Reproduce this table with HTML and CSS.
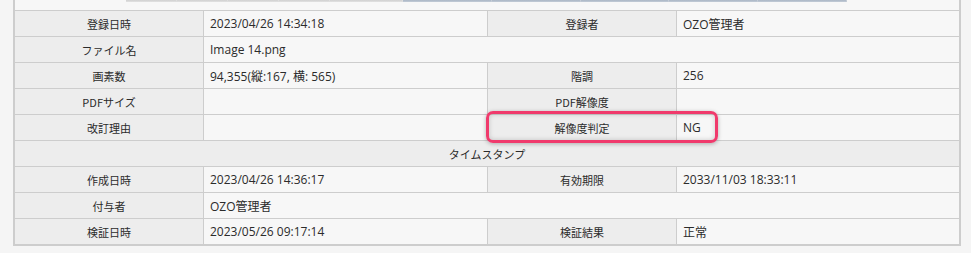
FILE: index.html
```html
<!DOCTYPE html>
<html lang="ja">
<head>
<meta charset="utf-8">
<title>画像情報</title>
<link rel="stylesheet" href="styles.css">
</head>
<body>
<div class="panel">
  <div class="tabs-edge">
    <span class="seg gray"></span><span class="seg gray"></span><span class="seg gray"></span><span class="seg gray"></span><span class="seg gray wide"></span>
    <span class="seg blue"></span><span class="seg blue"></span><span class="seg blue"></span><span class="seg blue"></span><span class="seg blue"></span>
  </div>
  <div class="info-grid">
    <div class="cell label first">登録日時</div>
    <div class="cell value">2023/04/26 14:34:18</div>
    <div class="cell label">登録者</div>
    <div class="cell value">OZO管理者</div>

    <div class="cell label first">ファイル名</div>
    <div class="cell value span3">Image 14.png</div>

    <div class="cell label first">画素数</div>
    <div class="cell value">94,355(縦:167, 横: 565)</div>
    <div class="cell label">階調</div>
    <div class="cell value">256</div>

    <div class="cell label first">PDFサイズ</div>
    <div class="cell value"></div>
    <div class="cell label">PDF解像度</div>
    <div class="cell value"></div>

    <div class="cell label first">改訂理由</div>
    <div class="cell value"></div>
    <div class="cell label">解像度判定</div>
    <div class="cell value">NG</div>

    <div class="cell section">タイムスタンプ</div>

    <div class="cell label first">作成日時</div>
    <div class="cell value">2023/04/26 14:36:17</div>
    <div class="cell label">有効期限</div>
    <div class="cell value">2033/11/03 18:33:11</div>

    <div class="cell label first">付与者</div>
    <div class="cell value span3">OZO管理者</div>

    <div class="cell label first">検証日時</div>
    <div class="cell value">2023/05/26 09:17:14</div>
    <div class="cell label">検証結果</div>
    <div class="cell value">正常</div>
  </div>
  <div class="highlight"></div>
</div>
</body>
</html>
```
FILE: styles.css
```css
html, body {
  margin: 0;
  padding: 0;
  background: #f5f5f5;
}

body {
  font-family: "Open Sans", "Noto Sans CJK JP", sans-serif;
  color: #2b2b2b;
}

.panel {
  position: relative;
  width: 944px;
  margin-left: 13px;
  padding-top: 10px;
  background: #f7f7f7;
  border-left: 2px solid #cdcdcd;
  border-right: 2px solid #cdcdcd;
  border-bottom: 2px solid #cdcdcd;
}

/* lower edge of the tab strip above the panel */
.tabs-edge {
  position: absolute;
  top: 0;
  left: 111px;
  width: 721px;
  height: 2px;
  display: flex;
}

.seg {
  border-right: 1px solid #dedede;
}

.seg.gray {
  flex: 0 0 50px;
  background: linear-gradient(#d0d0d0, #e2e2e2);
}

.seg.gray.wide { flex: 0 0 72px; }

.seg.blue {
  flex: 1;
  background: linear-gradient(#aab6c5, #c3ccd7);
  border-right-color: #c5ccd6;
}

.info-grid {
  display: grid;
  grid-template-columns: 188px 284px 189px 283px;
  grid-auto-rows: 26px;
}

.cell {
  box-sizing: border-box;
  border-top: 1px solid #cdcdcd;
  border-left: 1px solid #cdcdcd;
  display: flex;
  align-items: center;
  font-size: 12px;
  white-space: nowrap;
}

.cell.first,
.cell.section {
  border-left: none;
}

.label {
  justify-content: center;
  background: #ededed;
  font-family: "Noto Sans CJK JP", sans-serif;
  font-size: 11px;
}

.value {
  background: #f7f7f7;
  padding-left: 6px;
}

.span3 { grid-column: span 3; }

.section {
  grid-column: span 4;
  justify-content: center;
  background: #ededed;
  font-family: "Noto Sans CJK JP", sans-serif;
  font-size: 11px;
}

/* emphasis frame around the resolution verdict */
.highlight {
  position: absolute;
  left: 471px;
  top: 111px;
  width: 226px;
  height: 26px;
  border: 3px solid #f03a6c;
  border-radius: 7px;
  box-shadow: 0 1px 4px rgba(0, 0, 0, 0.28), inset 0 0 5px rgba(0, 0, 0, 0.18);
  pointer-events: none;
}
```
